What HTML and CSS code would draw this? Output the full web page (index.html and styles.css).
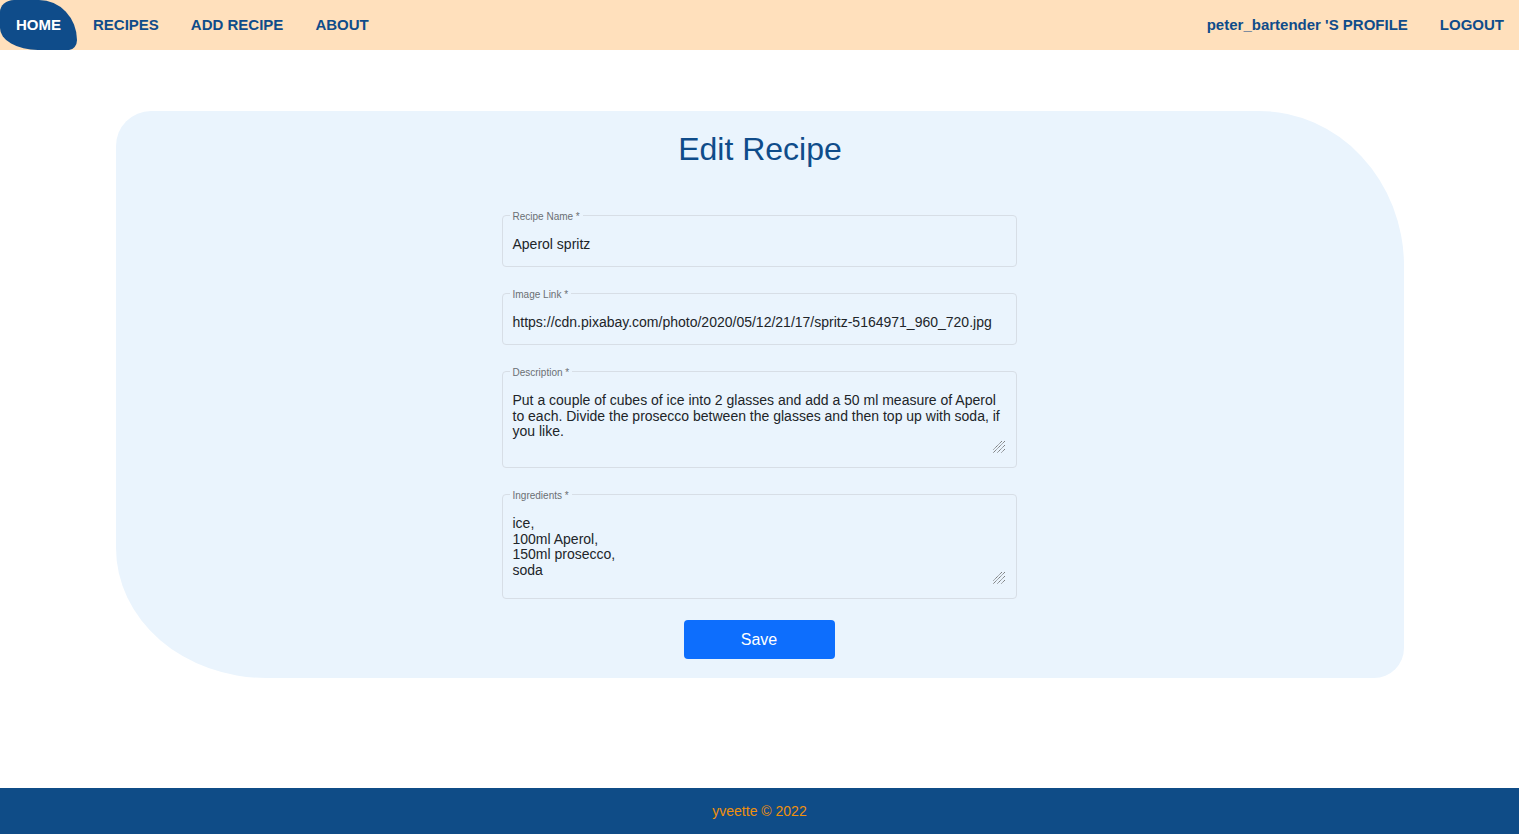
FILE: index.html
```html
<!DOCTYPE html>
<html lang="en">
<head>
<meta charset="utf-8">
<title>Edit Recipe</title>
<link rel="stylesheet" href="styles.css">
</head>
<body>
<header class="topbar">
  <nav class="nav-left">
    <a class="nav-link active" href="#">HOME</a>
    <a class="nav-link" href="#">RECIPES</a>
    <a class="nav-link" href="#">ADD RECIPE</a>
    <a class="nav-link" href="#">ABOUT</a>
  </nav>
  <nav class="nav-right">
    <a class="nav-link" href="#">peter_bartender 'S PROFILE</a>
    <a class="nav-link" href="#">LOGOUT</a>
  </nav>
</header>

<main class="main">
  <section class="card">
    <h1 class="title">Edit Recipe</h1>
    <form class="form">
      <fieldset class="field">
        <legend class="legend">Recipe Name *</legend>
        <div class="value">Aperol spritz</div>
      </fieldset>
      <fieldset class="field">
        <legend class="legend">Image Link *</legend>
        <div class="value">https://cdn.pixabay.com/photo/2020/05/12/21/17/spritz-5164971_960_720.jpg</div>
      </fieldset>
      <fieldset class="field">
        <legend class="legend">Description *</legend>
        <div class="area area-desc">Put a couple of cubes of ice into 2 glasses and add a 50 ml measure of Aperol to each. Divide the prosecco between the glasses and then top up with soda, if you like.
          <svg class="grip" width="14" height="14" viewBox="0 0 14 14"><path d="M13 1 L1 13 M13 5 L5 13 M13 9 L9 13 M10 1 L1 10" stroke="#6b6b6b" stroke-width="1" fill="none" stroke-dasharray="1.2 0.6"/></svg>
        </div>
      </fieldset>
      <fieldset class="field field-last">
        <legend class="legend">Ingredients *</legend>
        <div class="area area-ingr">ice,<br>100ml Aperol,<br>150ml prosecco,<br>soda
          <svg class="grip" width="14" height="14" viewBox="0 0 14 14"><path d="M13 1 L1 13 M13 5 L5 13 M13 9 L9 13 M10 1 L1 10" stroke="#6b6b6b" stroke-width="1" fill="none" stroke-dasharray="1.2 0.6"/></svg>
        </div>
      </fieldset>
      <button type="button" class="save">Save</button>
    </form>
  </section>
</main>

<footer class="footer">yveette © 2022</footer>
</body>
</html>
```

FILE: styles.css
```css
* { box-sizing: border-box; }
html, body { margin: 0; padding: 0; }
body {
  font-family: "Liberation Sans", Arial, sans-serif;
  min-height: 100vh;
  display: flex;
  flex-direction: column;
  background: #ffffff;
}
.topbar {
  height: 50px;
  background: #ffe0bc;
  display: flex;
  justify-content: space-between;
  align-items: stretch;
  flex-shrink: 0;
}
.nav-left, .nav-right {
  display: flex;
  align-items: stretch;
}
.nav-link {
  display: flex;
  align-items: center;
  padding: 0 16px 2px;
  font-size: 15px;
  font-weight: bold;
  color: #0f4c8a;
  text-decoration: none;
}
.nav-right .nav-link:last-child { padding-right: 15px; }
.nav-link.active {
  background: #0f4c8a;
  color: #ffffff;
  border-radius: 14px 38px 8px 38px / 12px 40px 10px 22px;
}
.main {
  flex: 1;
  padding-top: 61px;
}
.card {
  width: 1288px;
  margin: 0 auto 0 116px;
  background: #eaf4fd;
  border-radius: 35px 145px 30px 150px / 35px 155px 30px 130px;
  padding: 19px 0 19px;
  display: flex;
  flex-direction: column;
  align-items: center;
}
.title {
  margin: 0;
  font-size: 32px;
  line-height: 38px;
  font-weight: normal;
  color: #0f4c8a;
}
.form {
  width: 515px;
  margin: 39px 2px 0 0;
  display: flex;
  flex-direction: column;
  align-items: center;
}
.field {
  width: 515px;
  margin: 0 0 18px;
  padding: 0 10px 14px;
  border: 1px solid #d7dee6;
  border-radius: 4px;
  min-inline-size: 0;
}
.field-last { margin-bottom: 21px; }
.legend {
  font-size: 10px;
  line-height: 12px;
  color: #6b6f73;
  padding: 4px 3px 0;
  margin-left: -3px;
}
.value {
  margin-top: 13px;
  font-size: 14px;
  line-height: 16px;
  color: #212529;
  white-space: nowrap;
}
.area {
  position: relative;
  margin-top: 14px;
  font-size: 14px;
  color: #212529;
}
.area-desc { height: 61px; line-height: 15.5px; }
.area-ingr { height: 69px; line-height: 15.7px; }
.field .area { margin-bottom: -1px; }
.grip {
  position: absolute;
  right: 0;
  bottom: 0;
}
.save {
  width: 151px;
  height: 39px;
  border: none;
  border-radius: 4px;
  background: #0d6efd;
  color: #ffffff;
  font-family: "Liberation Sans", Arial, sans-serif;
  font-size: 16px;
  cursor: pointer;
}
.footer {
  height: 46px;
  flex-shrink: 0;
  background: #0f4c87;
  color: #f0900c;
  font-size: 14px;
  display: flex;
  align-items: center;
  justify-content: center;
}
```
